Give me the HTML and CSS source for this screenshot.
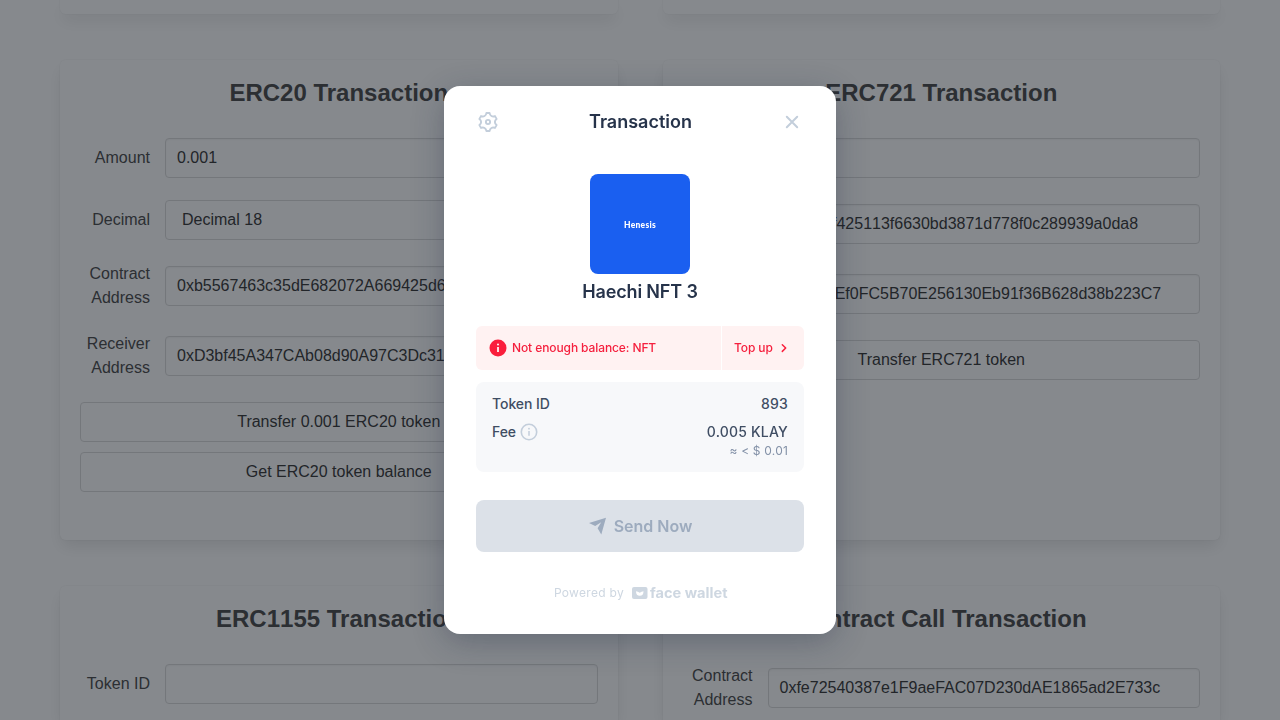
FILE: index.html
```html
<!DOCTYPE html>
<html lang="en">
<head>
<meta charset="utf-8">
<title>Transaction</title>
<link rel="stylesheet" href="styles.css">
</head>
<body>
<main class="page">
  <section class="box box-first"></section>
  <section class="box box-first"></section>

  <section class="box">
    <h2 class="title">ERC20 Transaction</h2>
    <div class="row"><span class="label">Amount</span><div class="input">0.001</div></div>
    <div class="row"><span class="label">Decimal</span><div class="input select">Decimal 18</div></div>
    <div class="row"><span class="label">Contract Address</span><div class="input">0xb5567463c35dE682072A669425d6a8f0c2b1E9d4</div></div>
    <div class="row"><span class="label">Receiver Address</span><div class="input">0xD3bf45A347CAb08d90A97C3Dc31e0f5aE2b7c916</div></div>
    <div class="button">Transfer 0.001 ERC20 token</div>
    <div class="button">Get ERC20 token balance</div>
  </section>
  <section class="box">
    <h2 class="title">ERC721 Transaction</h2>
    <div class="row"><span class="label">Token ID</span><div class="input"></div></div>
    <div class="row"><span class="label">Contract Address</span><div class="input unkerned">0x7a0df425113f6630bd3871d778f0c289939a0da8</div></div>
    <div class="row"><span class="label">Receiver Address</span><div class="input">0xDa3bEf0FC5B70E256130Eb91f36B628d38b223C7</div></div>
    <div class="button">Transfer ERC721 token</div>
  </section>

  <section class="box">
    <h2 class="title">ERC<span class="unkerned">1155</span> Transaction</h2>
    <div class="row"><span class="label">Token ID</span><div class="input"></div></div>
  </section>
  <section class="box">
    <h2 class="title">Contract Call Transaction</h2>
    <div class="row"><span class="label">Contract Address</span><div class="input">0xfe72540387e1F9aeFAC07D230dAE1865ad2E733c</div></div>
  </section>
</main>

<div class="overlay">
  <div class="modal">
    <header class="modal-head">
      <svg class="icon" width="24" height="24" viewBox="0 0 24 24" fill="none" stroke="#c3cedb" stroke-width="1.9" stroke-linejoin="round">
        <path d="M10.400 3h3.200C13.900 5.800 16.400 7.300 19 6.100L20.600 8.900C18.300 10.600 18.300 13.400 20.600 15.100L19 17.900C16.400 16.700 13.900 18.200 13.600 21H10.400C10.100 18.200 7.600 16.700 5 17.900L3.400 15.100C5.700 13.400 5.700 10.600 3.400 8.900L5 6.100C7.600 7.300 10.100 5.800 10.400 3z"/>
        <circle cx="12" cy="12" r="2.100"/>
      </svg>
      <h1 class="modal-title">Transaction</h1>
      <svg class="icon" width="24" height="24" viewBox="0 0 24 24" fill="none" stroke="#c3cedb" stroke-width="2" stroke-linecap="round">
        <path d="M6.800 6.800l10.400 10.400M17.200 6.800L6.800 17.200"/>
      </svg>
    </header>
    <div class="token-image"><span>Henesis</span></div>
    <div class="token-name">Haechi NFT 3</div>
    <div class="alert">
      <div class="alert-text">
        <svg width="20" height="20" viewBox="0 0 20 20"><circle cx="10" cy="10" r="8.500" fill="#fa1e3c"/><path d="M10 9v5" stroke="#fff" stroke-width="1.700"/><circle cx="10" cy="6.500" r="1" fill="#fff"/></svg>
        <span>Not enough balance: NFT</span>
      </div>
      <div class="alert-action">
        <span class="top-up">Top up</span>
        <svg width="16" height="16" viewBox="0 0 16 16" fill="none" stroke="#fa1e3c" stroke-width="1.500" stroke-linecap="round" stroke-linejoin="round"><path d="M6.300 4.700L9.700 8l-3.400 3.400"/></svg>
      </div>
    </div>
    <div class="details">
      <div class="detail"><span>Token ID</span><span class="amount">893</span></div>
      <div class="detail">
        <span class="fee">Fee
          <svg width="20" height="20" viewBox="0 0 20 20" fill="none" stroke="#c3cedb"><circle cx="10" cy="10" r="7.700" stroke-width="1.600"/><path d="M10 9v4.800" stroke-width="1.500"/><circle cx="10" cy="6.700" r=".9" fill="#c3cedb" stroke="none"/></svg>
        </span>
        <span class="amount">0.005 KLAY</span>
      </div>
      <div class="fiat">≈ &lt; $ 0.01</div>
    </div>
    <div class="send">
      <svg width="20" height="20" viewBox="0 0 20 20" fill="#9dabbe"><path d="M18 1.800L13.300 18.600 9.600 12.300 13.200 6.300 7.200 9.900 1 7z"/></svg>
      <span>Send Now</span>
    </div>
    <footer class="powered">
      <span>Powered by</span>
      <svg width="96" height="16" viewBox="0 0 96 16" fill="#ced7e1">
        <rect y="1.900" width="15.500" height="12" rx="2"/>
        <path d="M4 6.300q2 0 3.750 1.500Q9.500 6.300 11.500 6.300 11.500 10.800 7.750 10.800T4 6.300z" fill="#fff"/>
        <text class="brand" x="18" y="13" textLength="77.500" lengthAdjust="spacingAndGlyphs">face wallet</text>
      </svg>
    </footer>
  </div>
</div>
</body>
</html>
```
FILE: styles.css
```css
* { box-sizing: border-box; }
html, body { height: 100%; }
body {
  margin: 0;
  overflow: hidden;
  background: #fff;
  color: #4a4a4a;
  font: 16px/24px "Liberation Sans", Arial, sans-serif;
}
.page {
  display: grid;
  grid-template-columns: 1fr 1fr;
  grid-template-rows: 14px 480px 134px;
  gap: 46px 45px;
  height: 720px;
  padding: 0 60px;
  overflow: hidden;
}
.box {
  padding: 20px;
  border-radius: 6px;
  background: #fff;
  box-shadow: 0 8px 16px -2px rgba(10,10,10,.1), 0 0 0 1px rgba(10,10,10,.02);
}
.box:nth-child(n+5) { padding-bottom: 0; border-radius: 6px 6px 0 0; }
.box-first { padding: 0; border-radius: 0 0 6px 6px; }
.title {
  margin: -1px 0 32px;
  color: #4a4a4a;
  font-size: 24px;
  font-weight: 700;
  line-height: 27px;
  text-align: center;
}
.unkerned { font-kerning: none; }
.row {
  display: flex;
  align-items: center;
  gap: 15px;
  margin-bottom: 22px;
}
.box:nth-child(n+5) .row { margin-bottom: 0; }
.label { width: 70px; flex: none; text-align: right; }
.input {
  flex: 1;
  min-width: 0;
  height: 40px;
  padding: 7px 11px;
  overflow: hidden;
  border: 1px solid #dbdbdb;
  border-radius: 4px;
  box-shadow: inset 0 1px 2px rgba(10,10,10,.05);
  color: #363636;
  white-space: nowrap;
}
.select { padding-left: 16px; box-shadow: none; }
.button {
  height: 40px;
  margin-bottom: 10px;
  padding: 7px 16px;
  border: 1px solid #dbdbdb;
  border-radius: 4px;
  color: #363636;
  text-align: center;
}
.overlay {
  position: fixed;
  inset: 0;
  display: flex;
  align-items: center;
  justify-content: center;
  background: rgba(14,19,27,.5);
}
.modal {
  display: flex;
  flex-direction: column;
  width: 392px;
  height: 548px;
  padding: 24px 32px;
  border-radius: 16px;
  background: #fff;
  box-shadow: 0 8px 32px rgba(32,42,67,.32);
  color: #3f4d63;
  font-family: Inter, sans-serif;
}
.modal-head {
  display: flex;
  align-items: center;
  justify-content: space-between;
  height: 24px;
  margin-bottom: 40px;
}
.modal-title, .token-name {
  margin: 0;
  color: #26334a;
  font-size: 18px;
  font-weight: 600;
  line-height: 24px;
  text-align: center;
}
.modal-title { padding-left: 1px; }
.token-image {
  display: flex;
  align-items: center;
  justify-content: center;
  align-self: center;
  width: 100px;
  height: 100px;
  padding-top: 1px;
  border-radius: 8px;
  background: #1a5ff0;
  color: #fff;
  font: 900 8.500px/10px Lato, sans-serif;
  letter-spacing: .3px;
}
.token-name { margin: 6px 0 22px; letter-spacing: -.15px; }
.alert {
  display: flex;
  gap: 1px;
  height: 44px;
  margin-bottom: 12px;
  color: #f5203e;
  font-size: 12px;
  font-weight: 500;
  line-height: 16px;
  letter-spacing: -.1px;
}
.alert-text, .alert-action {
  display: flex;
  align-items: center;
  background: #fff2f2;
}
.alert-text { flex: 1; gap: 4px; padding-left: 12px; border-radius: 6px 0 0 6px; }
.alert-action { width: 82px; padding-left: 12px; border-radius: 0 6px 6px 0; }
.top-up { width: 42px; }
.details {
  height: 90px;
  margin-bottom: 28px;
  padding: 12px 16px;
  border-radius: 8px;
  background: #f7f8fa;
  font-size: 14px;
  font-weight: 500;
  line-height: 20px;
  letter-spacing: -.05px;
}
.detail { display: flex; justify-content: space-between; height: 20px; margin-bottom: 8px; }
.amount { letter-spacing: .2px; }
.fee { display: flex; align-items: center; gap: 3px; }
.fiat {
  margin-top: -8px;
  color: #8391a7;
  font-size: 12px;
  font-weight: 400;
  line-height: 18px;
  letter-spacing: .2px;
  text-align: right;
}
.send {
  display: flex;
  align-items: center;
  justify-content: center;
  gap: 6px;
  height: 52px;
  margin-bottom: 32px;
  border-radius: 8px;
  background: #dce1e8;
  color: #9dabbe;
  font-size: 16px;
  font-weight: 600;
}
.powered {
  display: flex;
  align-items: center;
  justify-content: flex-end;
  gap: 8px;
  height: 18px;
  padding-right: 76px;
  color: #ced7e1;
  font-size: 12px;
  letter-spacing: .3px;
}
.brand { font: 700 14px Inter, sans-serif; letter-spacing: 0; }
```
